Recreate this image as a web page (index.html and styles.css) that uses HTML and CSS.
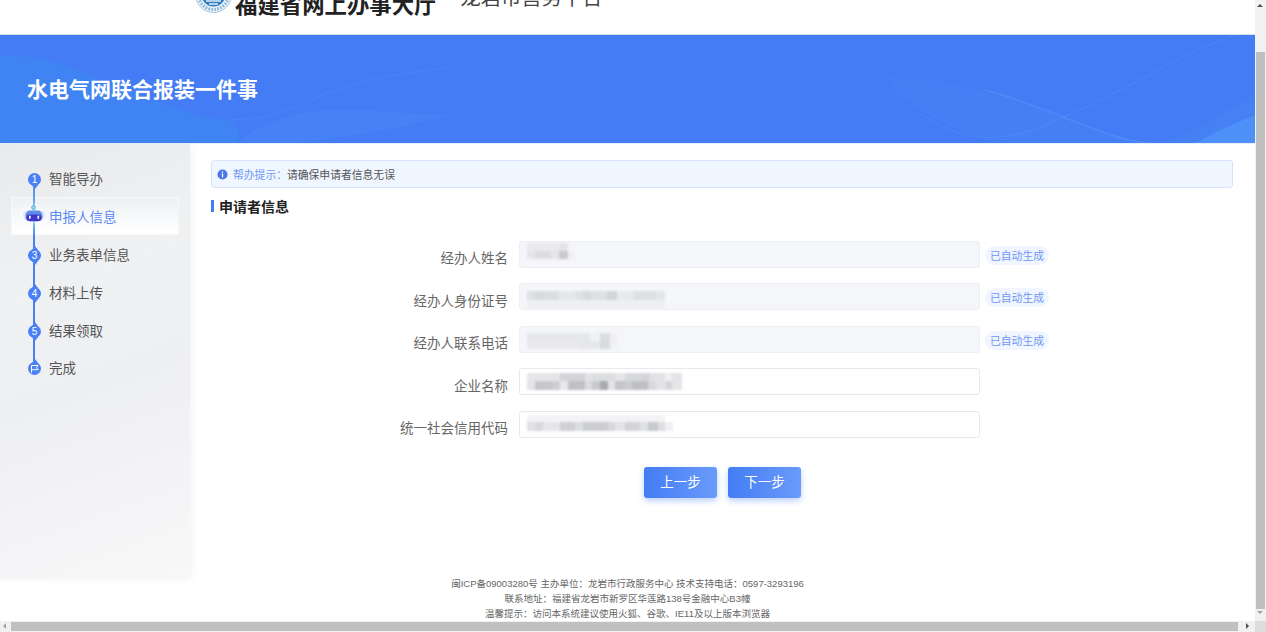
FILE: index.html
```html
<!DOCTYPE html>
<html lang="zh-CN">
<head>
<meta charset="utf-8">
<title>水电气网联合报装一件事</title>
<link rel="stylesheet" href="styles.css">
</head>
<body>
<div class="viewport">
  <div class="page">
    <header class="topbar">
      <div class="brand">
        <svg class="emblem" viewBox="0 0 37 37" aria-hidden="true">
          <circle cx="18.5" cy="18.5" r="18" fill="#e8f1f8" stroke="#a9c8e0" stroke-width="1"/>
          <circle cx="18.5" cy="18.5" r="15" fill="none" stroke="#7fb0d6" stroke-width="3" stroke-dasharray="1.5 1.5"/>
          <circle cx="18.5" cy="18.5" r="12" fill="#2f7dc0"/>
          <path d="M11 25h15M14 28h9" stroke="#dfeefa" stroke-width="1.4"/>
        </svg>
        <span class="brand-name">福建省网上办事大厅</span>
        <span class="brand-sub">龙岩市营务平台</span>
      </div>
    </header>

    <section class="banner">
      <svg class="waves" viewBox="0 0 1255 108" preserveAspectRatio="none" aria-hidden="true">
        <path d="M0 20C14 21 28 22 41 23C62 28 82 36 102 45C122 53 142 61 163 68C185 76 207 85 229 85C240 92 240 100 237 108H0Z" fill="#3b95ec" fill-opacity=".3"/>
        <path d="M237 108C252 95 268 88 286 82C312 75 340 73 367 75C395 77 422 80 449 80C400 95 340 102 300 108Z" fill="#4f90f7" fill-opacity=".28"/>
        <path d="M229 85C245 84 262 84 278 78C295 72 310 65 327 58C355 48 380 42 408 38C422 36 436 34 449 33" fill="none" stroke="#5f9af8" stroke-opacity=".22" stroke-width="1.5"/>
        <path d="M887 43C940 42 990 55 1063 82C1090 92 1120 106 1151 108H1000C960 100 900 70 887 43Z" fill="#4f8ef7" fill-opacity=".18"/>
        <path d="M985 55C1015 63 1040 73 1063 82C1090 92 1120 106 1151 108" fill="none" stroke="#6ba5f9" stroke-opacity=".35" stroke-width="1.5"/>
        <path d="M1235 0C1180 18 1120 60 1063 82C1020 104 985 106 959 98C945 93 930 85 919 78" fill="none" stroke="#66a0f8" stroke-opacity=".3" stroke-width="1"/>
        <path d="M1255 60C1225 75 1195 100 1160 108H1255Z" fill="#4c90f6" fill-opacity=".28"/>
        <path d="M1255 80C1230 90 1210 100 1195 108H1255Z" fill="#5aa8fa" fill-opacity=".4"/>
      </svg>
      <h1 class="banner-title">水电气网联合报装一件事</h1>
    </section>

    <div class="workspace">
      <aside class="sidebar">
        <ol class="steps">
          <li class="step"><span class="dot">1</span><span class="step-label">智能导办</span></li>
          <li class="step step-active">
            <svg class="robot" viewBox="0 0 22 17" aria-hidden="true">
              <circle cx="10.5" cy="2.5" r="2" fill="#8fd3ec" stroke="#5aa8e0" stroke-width=".8"/>
              <rect x="0" y="5" width="22" height="11" rx="5.5" fill="#dfe8fb"/>
              <rect x="2.5" y="5.5" width="17" height="11" rx="5" fill="#5e8ce8"/>
              <rect x="3.5" y="9.5" width="15" height="6.5" rx="3" fill="#3f37c9"/>
              <rect x="6" y="10.5" width="1.6" height="3.6" rx=".8" fill="#fff"/>
              <rect x="14.5" y="10.5" width="1.6" height="3.6" rx=".8" fill="#fff"/>
            </svg>
            <span class="step-label">申报人信息</span>
          </li>
          <li class="step"><span class="dot">3</span><span class="step-label">业务表单信息</span></li>
          <li class="step"><span class="dot">4</span><span class="step-label">材料上传</span></li>
          <li class="step"><span class="dot">5</span><span class="step-label">结果领取</span></li>
          <li class="step step-last">
            <span class="dot">
              <svg class="flag" viewBox="0 0 12 12" aria-hidden="true"><path d="M2 11.5V2h8.8L8.6 4.8 10.8 7.6H2" fill="none" stroke="#fff" stroke-width="1.3"/></svg>
            </span>
            <span class="step-label">完成</span>
          </li>
        </ol>
      </aside>

      <main class="content">
        <div class="notice">
          <svg class="info" viewBox="0 0 12 12" aria-hidden="true">
            <circle cx="6" cy="6" r="5.5" fill="#4a76e8"/>
            <rect x="5.3" y="2.6" width="1.4" height="1.4" fill="#fff"/>
            <rect x="5.3" y="4.8" width="1.4" height="4.4" fill="#fff"/>
          </svg>
          <span class="notice-key">帮办提示：</span><span class="notice-text">请确保申请者信息无误</span>
        </div>
        <h2 class="section-title">申请者信息</h2>

        <form class="form">
          <div class="row">
            <label class="field-label">经办人姓名</label>
            <div class="input input-readonly"><span class="mosaic mosaic-name"></span></div>
            <span class="auto-tag">已自动生成</span>
          </div>
          <div class="row">
            <label class="field-label">经办人身份证号</label>
            <div class="input input-readonly"><span class="mosaic mosaic-id"></span></div>
            <span class="auto-tag">已自动生成</span>
          </div>
          <div class="row">
            <label class="field-label">经办人联系电话</label>
            <div class="input input-readonly"><span class="mosaic mosaic-phone"></span></div>
            <span class="auto-tag">已自动生成</span>
          </div>
          <div class="row">
            <label class="field-label">企业名称</label>
            <div class="input"><span class="mosaic mosaic-company"></span></div>
          </div>
          <div class="row">
            <label class="field-label">统一社会信用代码</label>
            <div class="input"><span class="mosaic mosaic-code"></span></div>
          </div>
          <div class="actions">
            <button type="button" class="btn">上一步</button>
            <button type="button" class="btn">下一步</button>
          </div>
        </form>

        <footer class="footer">
          <p>闽ICP备09003280号 主办单位：龙岩市行政服务中心 技术支持电话：0597-3293196</p>
          <p>联系地址：福建省龙岩市新罗区华莲路138号金融中心B3幢</p>
          <p>温馨提示：访问本系统建议使用火狐、谷歌、IE11及以上版本浏览器</p>
        </footer>
      </main>
    </div>
  </div>

  <div class="vscroll">
    <span class="arrow arrow-up"></span>
    <span class="vthumb"></span>
    <span class="arrow arrow-down"></span>
  </div>
  <div class="hscroll">
    <span class="arrow arrow-left"></span>
    <span class="hthumb"></span>
    <span class="arrow arrow-right"></span>
  </div>
  <div class="corner"></div>
</div>
</body>
</html>
```

FILE: styles.css
```css
* { box-sizing: border-box; }
html, body { margin: 0; height: 100%; overflow: hidden; background: #fff; }
body { font-family: "Liberation Sans", "Noto Sans CJK SC", sans-serif; color: #333; }

.viewport {
  width: 1266px;
  height: 632px;
  display: grid;
  grid-template-columns: 1255px 11px;
  grid-template-rows: 621px 11px;
}

.page { overflow: hidden; background: #fff; }

.topbar {
  height: 35px;
  border-bottom: 1px solid #d8dbe2;
  overflow: hidden;
  padding-left: 195px;
}
.brand {
  display: flex;
  align-items: flex-start;
  margin-top: -24px;
  white-space: nowrap;
}
.emblem { width: 37px; height: 37px; flex: none; }
.brand-name {
  margin: 9px 0 0 3px;
  font: 700 22.4px/36px "Noto Sans CJK SC", serif;
  color: #222;
}
.brand-sub {
  margin: 2px 0 0 24px;
  font: 20.3px/36px "Noto Sans CJK SC", sans-serif;
  color: #444;
}

.banner {
  position: relative;
  height: 108px;
  background: #437cf5;
  display: flex;
  align-items: center;
  padding: 2px 0 0 27px;
  overflow: hidden;
}
.waves { position: absolute; inset: 0; width: 100%; height: 100%; }
.banner-title {
  position: relative;
  margin: 0;
  font-size: 21px;
  font-weight: 700;
  color: #fff;
  line-height: 28px;
}

.workspace { display: flex; height: 478px; border-top: 1px solid #e6edfb; }

.sidebar {
  width: 190px;
  height: 435px;
  flex: none;
  padding-top: 15px;
  background: linear-gradient(160deg, #e9eaec 0%, #f0f1f3 32%, #eeeff2 55%, #f8f8f9 100%);
  box-shadow: 2px 0 8px rgba(0, 0, 0, .05);
}
.steps {
  position: relative;
  list-style: none;
  margin: 0;
  padding: 0;
}
.steps::before {
  content: "";
  position: absolute;
  z-index: 1;
  left: 32.5px;
  top: 20px;
  width: 2.5px;
  height: 190px;
  background: linear-gradient(180deg, #4a80f5 0, #65b2ee 28px, #65b2ee 46px, #4a80f5 58px);
}
.step {
  position: relative;
  display: flex;
  align-items: center;
  height: 38px;
  padding-left: 28px;
  font-size: 13.5px;
  color: #555;
}
.step-last { margin-top: -1px; }
.step-active {
  margin: 0 11px;
  padding-left: 11px;
  color: #5b8bf5;
  background: linear-gradient(180deg, #eef0f3 0%, #fff 100%);
  border: 1px solid #f6f7f9;
}
.dot {
  position: relative;
  z-index: 2;
  top: 1px;
  width: 13px;
  height: 13px;
  flex: none;
  border-radius: 50%;
  background: #4a80f5;
  color: #fff;
  font-size: 10px;
  line-height: 13px;
  display: flex;
  align-items: center;
  justify-content: center;
}
.dot::before,
.dot::after {
  content: "";
  position: absolute;
  left: 3.5px;
  border-left: 3px solid transparent;
  border-right: 3px solid transparent;
}
.dot::before { top: -3px; border-bottom: 4px solid #4a80f5; }
.dot::after { bottom: -3px; border-top: 4px solid #4a80f5; }
.step:first-child .dot::before,
.step:last-child .dot::after { display: none; }
.flag { width: 9px; height: 9px; display: block; }
.step-label { margin-left: 8px; white-space: nowrap; }
.robot {
  position: relative;
  z-index: 2;
  width: 22px;
  height: 17px;
  flex: none;
  margin-top: -6px;
  filter: drop-shadow(0 0 3px #fff);
}
.step-active .step-label { margin-left: 4px; }

.content {
  flex: 1;
  min-width: 0;
  padding: 16px 22px 0 21px;
  display: flex;
  flex-direction: column;
}

.notice {
  height: 28px;
  flex: none;
  display: flex;
  align-items: center;
  padding-left: 5px;
  background: #eff6ff;
  border: 1px solid #d6e4fb;
  border-radius: 3px;
  font-size: 10.8px;
}
.info { width: 11px; height: 11px; flex: none; margin-right: 5px; }
.notice-key { color: #6f97f5; }
.notice-text { color: #555; }

.section-title {
  margin: 12px 0 0;
  padding: 2px 0 0 5px;
  height: 12px;
  flex: none;
  display: flex;
  align-items: center;
  border-left: 3px solid #437cf4;
  font-size: 14px;
  font-weight: 700;
  line-height: 14px;
  color: #222;
}

.form { margin-top: 28.6px; display: flex; flex-direction: column; gap: 15.6px; }
.row { display: flex; align-items: center; height: 27px; }
.field-label {
  width: 308px;
  flex: none;
  padding-right: 11px;
  text-align: right;
  font-size: 13.5px;
  color: #666;
  margin-top: 6px;
}
.input {
  width: 461px;
  height: 27px;
  flex: none;
  background: #fff;
  border: 1px solid #e8e9ed;
  border-radius: 3px;
  padding: 1px 0 0 7px;
}
.input-readonly { background: #f5f6fa; border-color: #eeeff2; }

.mosaic { display: block; height: 23px; filter: blur(1px); background-repeat: no-repeat; }
.mosaic-name {
  width: 47px;
  background-image:
    linear-gradient(90deg, #e9e9ee 0 33px, #e3e3e8 33px 41px, transparent 41px),
    linear-gradient(90deg, #e5e5ea 0 8px, #dcdde2 8px 24px, #e5e5ea 24px 32px, #c9c9cf 32px 41px, #f0f0f4 41px 47px);
  background-size: 100% 8px, 100% 8px;
  background-position: 0 0, 0 8px;
}
.mosaic-id {
  width: 138px;
  background-image:
    linear-gradient(90deg, #e0e1e5 0 8px, #d8d9dd 8px 16px, #dcdde0 16px 32px, #e6e7ea 32px 48px, #e0e1e4 48px 56px, #d8d9dd 56px 64px, #dfe0e3 64px 80px, #d3d4d8 80px 90px, #e8e9ec 90px 106px, #dfe0e5 106px 128px, #e4e5e8 128px 138px),
    linear-gradient(90deg, #eeeff3 0 138px);
  background-size: 100% 9px, 100% 8px;
  background-position: 0 6px, 0 15px;
}
.mosaic-phone {
  width: 90px;
  background-image:
    linear-gradient(90deg, #e6e7eb 0 63px, #f0f1f5 63px 73px, #dcdde3 73px 83px, #efeff3 83px 90px),
    linear-gradient(90deg, #eaeaee 0 53px, #e6e7ea 53px 73px, #dadbe0 73px 83px, #f0f1f5 83px 90px);
  background-size: 100% 8px, 100% 8px;
  background-position: 0 5px, 0 13px;
}
.mosaic-company {
  width: 155px;
  background-image:
    linear-gradient(90deg, #e6e6ea 0 33px, #d3d4d8 33px 58px, #e3e3e7 58px 65px, #dcdde0 65px 88px, #e6e6ea 88px 98px, #d8d9dc 98px 113px, #d5d6da 113px 123px, #e2e2e6 123px 138px, #efeff2 138px 145px, #e4e4e8 145px 155px),
    linear-gradient(90deg, #e4e4e8 0 8px, #c6c7cc 8px 25px, #cecfd3 25px 33px, #e9e9ec 33px 41px, #c0c1c6 41px 58px, #dadbde 58px 65px, #c9cace 65px 73px, #a9aab0 73px 81px, #e4e4e8 81px 88px, #c4c5ca 88px 98px, #cccdd1 98px 105px, #bfc0c5 105px 121px, #d8d8dc 121px 129px, #e4e4e8 129px 139px, #d6d6da 139px 145px, #e6e6ea 145px 155px);
  background-size: 100% 8px, 100% 9px;
  background-position: 0 3px, 0 11px;
}
.mosaic-code {
  width: 146px;
  background-image:
    linear-gradient(90deg, #f3f3f5 0 138px, transparent 138px),
    linear-gradient(90deg, #e0e1e4 0 8px, #d8d9dc 8px 16px, #e6e6e9 16px 33px, #cfd0d4 33px 48px, #dcdde0 48px 56px, #cccdd1 56px 81px, #d6d7da 81px 88px, #e4e4e8 88px 98px, #d3d4d8 98px 113px, #e0e1e4 113px 121px, #c8c9cd 121px 131px, #dddee1 131px 138px, #f0f0f2 138px 146px);
  background-size: 100% 7px, 100% 9px;
  background-position: 0 2px, 0 9px;
}

.auto-tag {
  margin: 2px 0 0 5px;
  width: 64px;
  height: 19px;
  text-align: center;
  border-radius: 10px;
  background: #f0f5ff;
  color: #6f97f5;
  font-size: 10.8px;
  line-height: 20px;
  white-space: nowrap;
}

.actions { display: flex; gap: 11px; padding-left: 433px; margin-top: 13.4px; }
.btn {
  width: 73px;
  height: 31px;
  border: 0;
  border-radius: 3px;
  padding: 0;
  background: linear-gradient(90deg, #437cf4 0%, #6a9bfb 100%);
  box-shadow: 0 3px 6px rgba(67, 124, 244, .35);
  color: #fff;
  font: 13.5px/31px "Liberation Sans", "Noto Sans CJK SC", sans-serif;
}

.footer {
  margin: 78px -22px 0 -211px;
  text-align: center;
  font-size: 9.5px;
  line-height: 15px;
  color: #666;
}
.footer p { margin: 0; }

.vscroll, .hscroll { background: #f1f1f1; position: relative; }
.vthumb { position: absolute; left: 1px; right: 1px; top: 52px; bottom: 12px; background: #c0c0c0; }
.hthumb { position: absolute; top: 1px; bottom: 1px; left: 11px; right: 17px; background: #c0c0c0; }
.corner { background: #dcdcdc; }
.arrow { position: absolute; width: 0; height: 0; border: 3px solid transparent; }
.arrow-up { top: 1px; left: 2px; border-bottom-color: #505050; }
.arrow-down { bottom: 4px; left: 2px; border-top-color: #a3a3a3; }
.arrow-left { left: 0; top: 2px; border-right-color: #a3a3a3; }
.arrow-right { right: 3px; top: 2px; border-left-color: #505050; }
```
